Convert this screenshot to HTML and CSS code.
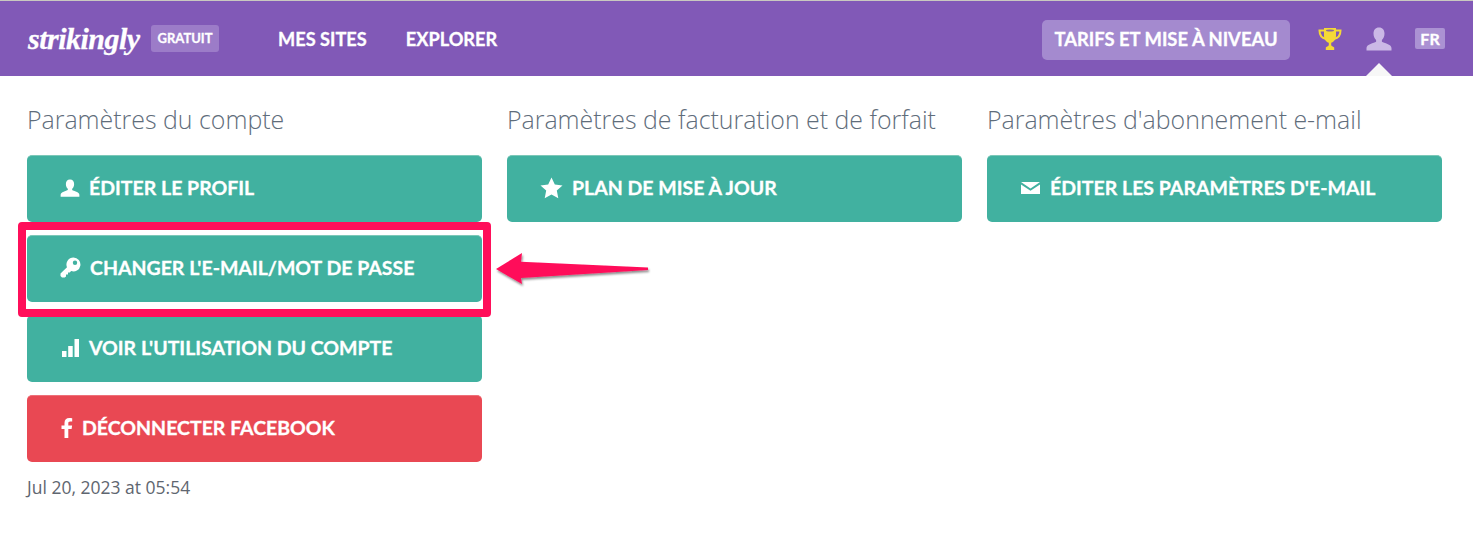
FILE: index.html
```html
<!DOCTYPE html>
<html lang="fr">

<head>
    <meta charset="UTF-8">
    <meta name="viewport" content="width=device-width, initial-scale=1.0">
    <title>Paramètres du compte</title>
    <link rel="stylesheet" href="styles.css">
</head>

<body>
    <header class="topbar">
        <div class="brand">strikingly</div>
        <span class="plan-tag">GRATUIT</span>
        <nav class="nav">
            <a class="nav-link">MES SITES</a>
            <a class="nav-link">EXPLORER</a>
        </nav>
        <div class="topbar-right">
            <a class="upgrade">TARIFS ET MISE À NIVEAU</a>
            <svg class="trophy" width="24" height="24" viewBox="0 0 24 24">
                <path d="M6 1h12v8c0 3.500-2.500 6-4.800 6.800v2.200c0 1 1.800 1.500 3 2.500V23H7.800v-2.500c1.200-1 3-1.500 3-2.500v-2.200C8.500 15 6 12.500 6 9z" fill="#f5d936" />
                <path d="M6.500 3.500H1.500c0 4.500 2 7.500 6.500 8.500M17.500 3.500h5c0 4.500-2 7.500-6.500 8.500" fill="none" stroke="#f5d936" stroke-width="2" />
                <ellipse cx="12" cy="3.500" rx="4" ry="1" fill="#8a6a9a" />
            </svg>
            <div class="account">
                <svg class="user-icon" width="26" height="24" viewBox="0 0 26 24">
                    <path d="M13 .5c3.600 0 5.500 2.600 5.500 6 0 2.600-1 5-2.600 6.400v1.800c2 1.400 9.600 2.400 9.600 6.300v2.500H.5V21c0-3.900 7.600-5 9.600-6.300v-1.800C8.500 11.500 7.500 9.100 7.500 6.500c0-3.400 1.900-6 5.500-6z" fill="#cbb8e6" />
                </svg>
                <span class="caret"></span>
            </div>
            <span class="lang">FR</span>
        </div>
    </header>

    <main class="columns">
        <section class="col">
            <h2 class="col-title">Paramètres du compte</h2>
            <a class="btn">
                <svg class="btn-icon" width="20" height="18" viewBox="0 0 26 24"><path d="M13 .5c3.600 0 5.500 2.600 5.500 6 0 2.600-1 5-2.600 6.400v1.800c2 1.400 9.600 2.400 9.600 6.300v2.500H.5V21c0-3.900 7.600-5 9.600-6.300v-1.800C8.500 11.500 7.500 9.100 7.500 6.500c0-3.400 1.900-6 5.500-6z" fill="#fff" /></svg>
                ÉDITER LE PROFIL
            </a>
            <a class="btn">
                <svg class="btn-icon" width="21" height="21" viewBox="0 0 21 21"><path d="M13.500 0.500a7 7 0 1 1-2.400 13.600L9.800 15.400H8v2H6v2l-1.300 1.100H2L.5 19v-2.400l6.500-6.300A7 7 0 0 1 13.500.5zM15 3.500a2.200 2.200 0 1 0 0 4.400 2.200 2.200 0 0 0 0-4.400z" fill="#fff" fill-rule="evenodd" /></svg>
                CHANGER L'E-MAIL/MOT DE PASSE
            </a>
            <a class="btn">
                <svg class="btn-icon bars-icon" width="17" height="18" viewBox="0 0 17 18"><path d="M0 12h4.500v6H0zM6.200 7h4.500v11H6.200zM12.500 0H17v18h-4.500z" fill="#fff" /></svg>
                VOIR L'UTILISATION DU COMPTE
            </a>
            <a class="btn btn-red">
                <svg class="btn-icon fb-icon" width="12" height="20" viewBox="0 0 12 20"><path d="M3.500 20V11H.5V7.500h3V5C3.500 1.800 5.400 0 8.300 0c1.300 0 2.500.1 2.900.2v3.200H9.200c-1.500 0-1.900.8-1.900 1.800v2.300h3.800l-.5 3.500H7.300v9z" fill="#fff" /></svg>
                DÉCONNECTER FACEBOOK
            </a>
            <p class="stamp">Jul 20, 2023 at 05:54</p>
        </section>

        <section class="col">
            <h2 class="col-title">Paramètres de facturation et de forfait</h2>
            <a class="btn">
                <svg class="btn-icon" width="23" height="22" viewBox="0 0 23 22"><path d="M11.500.5l3.300 7 7.700.9-5.700 5.200 1.500 7.600-6.800-3.800-6.800 3.800 1.500-7.600L.5 8.400l7.700-.9z" fill="#fff" /></svg>
                PLAN DE MISE À JOUR
            </a>
        </section>

        <section class="col">
            <h2 class="col-title">Paramètres d'abonnement e-mail</h2>
            <a class="btn">
                <svg class="btn-icon mail-icon" width="19" height="12" viewBox="0 0 19 12"><path d="M0 0h19L9.500 6.500zM0 2.500l9.500 6.300 9.500-6.300V12H0z" fill="#fff" /></svg>
                ÉDITER LES PARAMÈTRES D'E-MAIL
            </a>
        </section>
    </main>

    <div class="highlight"></div>

    <svg class="arrow" width="160" height="44" viewBox="0 0 160 44">
        <defs>
            <filter id="arrow-shadow" x="-10%" y="-20%" width="120%" height="150%">
                <feDropShadow dx="1" dy="2" stdDeviation="1.200" flood-color="#000" flood-opacity="0.45" />
            </filter>
        </defs>
        <path d="M2 22L28 6l-1 8.700L154 20.500v2.500L27 31l1 6z" fill="#ff0f5a" filter="url(#arrow-shadow)" />
    </svg>
</body>

</html>
```

FILE: styles.css
```css
html,
body {
    height: 100%;
    margin: 0;
    padding: 0;
    background: #fff;
}

body {
    position: relative;
    font-family: "Open Sans", sans-serif;
    overflow: hidden;
}

.topbar {
    height: 75px;
    border-top: 1px solid #c9c9c0;
    background-color: #8159b7;
    display: flex;
    align-items: center;
    padding: 0 28px;
    color: #fff;
    font-family: Lato, sans-serif;
    font-weight: 700;
    -webkit-text-stroke: 0.3px #fff;
}

.brand {
    font-family: "Liberation Serif", serif;
    font-style: italic;
    font-weight: 700;
    font-size: 30px;
    letter-spacing: -0.500px;
    width: 123px;
}

.plan-tag {
    width: 68px;
    height: 27px;
    line-height: 27px;
    text-align: center;
    font-size: 13px;
    border-radius: 3px;
    background-color: #9c7cc8;
}

.nav {
    display: flex;
    gap: 39px;
    margin-left: 59px;
}

.nav-link {
    font-size: 18.200px;
}

.topbar-right {
    margin-left: auto;
    display: flex;
    align-items: center;
}

.upgrade {
    width: 248px;
    height: 40px;
    margin-top: 2px;
    line-height: 39px;
    text-align: center;
    font-size: 18.400px;
    border-radius: 5px;
    background-color: #a48acf;
}

.trophy {
    margin-left: 28px;
}

.account {
    position: relative;
    height: 24px;
    margin-left: 24px;
}

.caret {
    position: absolute;
    left: 0;
    top: 36px;
    border-left: 13px solid transparent;
    border-right: 13px solid transparent;
    border-bottom: 13px solid #f7f7f7;
}

.lang {
    width: 30px;
    height: 21px;
    line-height: 21px;
    margin-left: 23px;
    text-align: center;
    font-size: 16px;
    border-radius: 2px;
    background-color: #ab92d3;
}

.columns {
    display: flex;
    gap: 25px;
    padding: 0 27px;
}

.col {
    width: 455px;
}

.col-title {
    margin: 27px 0 20px;
    height: 32px;
    line-height: 32px;
    font-size: 24.900px;
    font-weight: 300;
    color: #5f6d7b;
    white-space: nowrap;
}

.btn {
    display: flex;
    align-items: center;
    box-sizing: border-box;
    height: 67px;
    margin-bottom: 13px;
    padding: 0 0 3px 33px;
    border-radius: 5px;
    border-top: 1px solid #7cc8b8;
    background-color: #41b1a0;
    color: #fff;
    font-family: Lato, sans-serif;
    font-weight: 700;
    font-size: 19.500px;
    -webkit-text-stroke: 0.3px #fff;
    white-space: nowrap;
}

.btn-red {
    background-color: #e94853;
    border-top-color: #ee7079;
}

.btn-icon {
    margin-right: 9px;
    flex: none;
}

.bars-icon {
    margin-left: 2px;
    margin-right: 10px;
}

.fb-icon {
    margin-left: 1px;
    margin-right: 9px;
}

.mail-icon {
    margin-left: 1px;
    margin-right: 10px;
}

.stamp {
    margin: 0;
    font-size: 17.500px;
    line-height: 24px;
    color: #5f6670;
}

/* annotations drawn on top of the page */
.highlight {
    position: absolute;
    left: 18px;
    top: 222px;
    width: 473px;
    height: 95px;
    box-sizing: border-box;
    border: 8px solid #ff0f5a;
    border-radius: 4px;
}

.arrow {
    position: absolute;
    left: 494px;
    top: 247px;
}
```
